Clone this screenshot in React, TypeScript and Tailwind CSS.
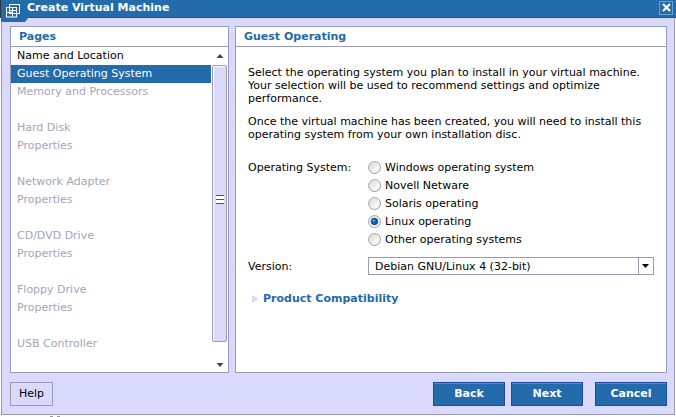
import React from 'react';

const pages = [
  { label: 'Name and Location', state: 'normal' },
  { label: 'Guest Operating System', state: 'active' },
  { label: 'Memory and Processors', state: 'off' },
  { label: '', state: 'off' },
  { label: 'Hard Disk', state: 'off' },
  { label: 'Properties', state: 'off' },
  { label: '', state: 'off' },
  { label: 'Network Adapter', state: 'off' },
  { label: 'Properties', state: 'off' },
  { label: '', state: 'off' },
  { label: 'CD/DVD Drive', state: 'off' },
  { label: 'Properties', state: 'off' },
  { label: '', state: 'off' },
  { label: 'Floppy Drive', state: 'off' },
  { label: 'Properties', state: 'off' },
  { label: '', state: 'off' },
  { label: 'USB Controller', state: 'off' },
];

const systems = [
  { label: 'Windows operating system', checked: false },
  { label: 'Novell Netware', checked: false },
  { label: 'Solaris operating', checked: false },
  { label: 'Linux operating', checked: true },
  { label: 'Other operating systems', checked: false },
];

function Radio({ checked }: { checked: boolean }) {
  return (
    <svg width="13" height="13" viewBox="0 0 13 13" className="shrink-0">
      <defs>
        <linearGradient id="radioRing" x1="0" y1="0" x2="1" y2="1">
          <stop offset="0" stopColor="#b4b4ac" />
          <stop offset="1" stopColor="#8c8cb0" />
        </linearGradient>
        <linearGradient id="radioFill" x1="0" y1="0" x2="1" y2="1">
          <stop offset="0" stopColor="#d4d4cc" />
          <stop offset="0.6" stopColor="#f4f4f0" />
          <stop offset="1" stopColor="#ffffff" />
        </linearGradient>
      </defs>
      <circle cx="6.5" cy="6.5" r="6" fill="url(#radioFill)" stroke="url(#radioRing)" />
      {checked && <circle cx="6.5" cy="6.5" r="3.2" fill="#0a5fc4" stroke="#06305f" strokeWidth="0.8" />}
      {checked && <circle cx="5.8" cy="5.6" r="1" fill="#7fc4f5" />}
    </svg>
  );
}

function BlueButton({ label, className }: { label: string; className?: string }) {
  return (
    <div
      className={`w-[72px] h-[24px] flex items-center justify-center bg-[#236baa] border border-[#2347a8] shadow-[inset_0_1px_0_#4a90d0] text-white font-bold text-[11px] ${className ?? ''}`}
    >
      {label}
    </div>
  );
}

export default function App() {
  return (
    <div
      className="relative w-[676px] h-[417px] overflow-hidden bg-white text-[11px] text-black flex flex-col"
      style={{ fontFamily: '"DejaVu Sans", Verdana, sans-serif' }}
    >
      {/* Title bar */}
      <div className="h-[18px] shrink-0 bg-[#236baa] border-b border-[#1c5590] flex items-center pl-[26px] pr-[3px] border-l border-l-[#333]">
        <span className="text-white font-bold text-[11px] leading-none -mt-[3px]">Create Virtual Machine</span>
        <div className="ml-auto w-[14px] h-[14px] -mt-[2px] border border-[#6aa0d0] flex items-center justify-center">
          <svg width="9" height="9" viewBox="0 0 9 9">
            <path d="M1 1 L8 8 M8 1 L1 8" stroke="#fff" strokeWidth="2.2" />
          </svg>
        </div>
      </div>

      {/* Tab corner and icon over the title bar */}
      <svg width="30" height="24" viewBox="0 0 30 24" className="absolute left-0 top-0">
        <path d="M1 17 H29 L25 22 H1 Z" fill="#236baa" />
        <g fill="none" stroke="#fff" strokeWidth="1">
          <rect x="9.5" y="4.5" width="10" height="9" />
          <rect x="6.5" y="7.5" width="10" height="9.5" />
          <path d="M6.5 12.5 H12.5 V17" />
          <path d="M9.5 7.5 V12.5 M12.5 7.5 V12.5 M9.5 10.5 H16.5" />
        </g>
      </svg>

      {/* Window body */}
      <div className="w-[674px] h-[397px] shrink-0 ml-px bg-[#d9d9fb] border border-t-0 border-[#9a9ab4] pl-[8px] pr-[7px] pt-[8px] flex flex-col">
        <div className="flex gap-[6px] h-[347px] shrink-0">
          {/* Pages */}
          <div className="w-[219px] bg-white border border-[#9a9ab4] flex flex-col">
            <div className="h-[20px] shrink-0 border-b border-[#9a9ab4] pl-[8px] pt-[2px] flex items-center text-[#236baa] font-bold">
              Pages
            </div>
            <div className="flex-1 flex min-h-0">
              <div className="w-[200px] shrink-0">
                {pages.map((p, i) => (
                  <div
                    key={i}
                    className={`h-[18px] pl-[6px] flex items-center ${
                      p.state === 'active'
                        ? 'bg-[#236baa] text-white'
                        : p.state === 'off'
                          ? 'text-[#a4a4b8]'
                          : 'text-black'
                    }`}
                  >
                    {p.label}
                  </div>
                ))}
              </div>
              {/* Scrollbar */}
              <div className="flex-1 flex flex-col items-start pl-[1px]">
                <svg width="8" height="18" viewBox="0 0 8 18" className="shrink-0 ml-[4px]">
                  <path d="M4 7 L7.5 11 H0.5 Z" fill="#444438" />
                </svg>
                <div className="w-[15px] h-[277px] shrink-0 bg-[#d9d9fb] border border-[#9a9ab4] rounded-[2px] shadow-[inset_1px_1px_0_#fff] flex items-center justify-center">
                  <div className="w-[8px] h-[9px] -mt-[9px] flex flex-col justify-between bg-white">
                    <div className="h-px bg-[#55553f]" />
                    <div className="h-px bg-[#55553f]" />
                    <div className="h-px bg-[#55553f]" />
                  </div>
                </div>
                <svg width="8" height="14" viewBox="0 0 8 14" className="shrink-0 ml-[4px] mt-[16px]">
                  <path d="M0.5 5 H7.5 L4 9 Z" fill="#444438" />
                </svg>
              </div>
            </div>
          </div>

          {/* Guest Operating */}
          <div className="w-[432px] bg-white border border-[#9a9ab4] flex flex-col">
            <div className="h-[20px] shrink-0 border-b border-[#9a9ab4] pl-[8px] pt-[2px] flex items-center text-[#236baa] font-bold">
              Guest Operating
            </div>
            <div className="pl-[12px] pr-[10px] pt-[19px] flex flex-col leading-[13px]">
              <p className="whitespace-nowrap">
                Select the operating system you plan to install in your virtual machine.
                <br />
                Your selection will be used to recommend settings and optimize
                <br />
                performance.
              </p>
              <p className="mt-[10px] whitespace-nowrap">
                Once the virtual machine has been created, you will need to install this
                <br />
                operating system from your own installation disc.
              </p>

              <div className="flex mt-[17px]">
                <div className="w-[120px] h-[18px] flex items-center">Operating System:</div>
                <div className="flex flex-col">
                  {systems.map((s) => (
                    <div key={s.label} className="h-[18px] flex items-center gap-[4px]">
                      <Radio checked={s.checked} />
                      <span>{s.label}</span>
                    </div>
                  ))}
                </div>
              </div>

              <div className="flex items-center mt-[9px]">
                <div className="w-[120px]">Version:</div>
                <div className="w-[286px] h-[18px] border border-[#9a9ab4] flex items-center">
                  <span className="flex-1 pl-[6px]">Debian GNU/Linux 4 (32-bit)</span>
                  <div className="w-[15px] h-full border-l border-[#9a9ab4] flex items-center justify-center pr-[2px]">
                    <svg width="7" height="4" viewBox="0 0 7 4">
                      <path d="M0 0 H7 L3.5 4 Z" fill="#000" />
                    </svg>
                  </div>
                </div>
              </div>

              <div className="flex items-center gap-[4px] mt-[17px] pl-[4px] text-[#236baa] font-bold">
                <svg width="7" height="8" viewBox="0 0 7 8" className="shrink-0">
                  <path d="M0 0 L7 4 L0 8 Z" fill="#cfdcf4" />
                </svg>
                <span>Product Compatibility</span>
              </div>
            </div>
          </div>
        </div>

        {/* Footer buttons */}
        <div className="flex mt-[9px]">
          <div className="w-[43px] h-[24px] border border-[#9a9ab4] flex items-center justify-center text-black">
            Help
          </div>
          <BlueButton label="Back" className="ml-auto" />
          <BlueButton label="Next" className="ml-[6px]" />
          <BlueButton label="Cancel" className="ml-[12px]" />
        </div>
      </div>

      {/* Marks below the window edge */}
      <div className="flex gap-[4px] pl-[50px] pt-[1px]">
        <div className="w-[3px] h-[2px] bg-[#999]" />
        <div className="w-[3px] h-[2px] bg-[#999]" />
      </div>
    </div>
  );
}
